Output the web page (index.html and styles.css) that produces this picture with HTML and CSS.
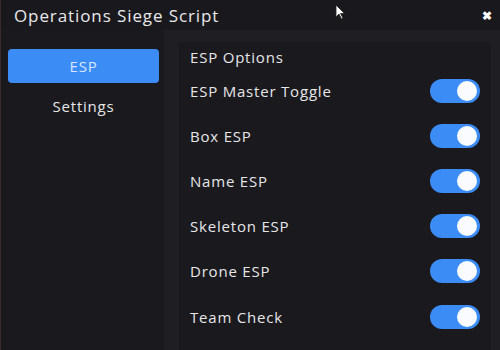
FILE: index.html
```html
<!DOCTYPE html>
<html>
    <head>
        <meta charset="UTF-8" />
        <title>Operations Siege Script</title>
        <link rel="stylesheet" href="styles.css">
    </head>

    <body>
        <div id="window">
            <div id="titleBar">
                <p id="title">Operations Siege Script</p>
                <span id="closeBtn">&#x2716;</span>
            </div>
            <div id="main">
                <div id="sidebar">
                    <div class="tab active">ESP</div>
                    <div class="tab">Settings</div>
                </div>
                <div id="content">
                    <p class="section-title">ESP Options</p>
                    <div class="option">
                        <span>ESP Master Toggle</span>
                        <span class="toggle on"></span>
                    </div>
                    <div class="option">
                        <span>Box ESP</span>
                        <span class="toggle on"></span>
                    </div>
                    <div class="option">
                        <span>Name ESP</span>
                        <span class="toggle on"></span>
                    </div>
                    <div class="option">
                        <span>Skeleton ESP</span>
                        <span class="toggle on"></span>
                    </div>
                    <div class="option">
                        <span>Drone ESP</span>
                        <span class="toggle on"></span>
                    </div>
                    <div class="option">
                        <span>Team Check</span>
                        <span class="toggle on"></span>
                    </div>
                </div>
            </div>
            <!-- mouse pointer captured in the screenshot -->
            <svg id="cursor" width="10" height="16" viewBox="0 0 10 16">
                <path d="M1 1 L1 13 L4 10 L6.5 15 L8 14.3 L5.6 9.5 L9.5 9.5 Z" fill="white" stroke="#222" stroke-width="0.8"/>
            </svg>
        </div>
    </body>
</html>
```

FILE: styles.css
```css
* {
    margin: 0;
    padding: 0;
    box-sizing: border-box;
}

body {
    width: 500px;
    height: 350px;
    overflow: hidden;
    background-color: #1f1e23;
    color: #e6e6e8;
    font-family: "Open Sans", "Noto Sans", sans-serif;
}

#window {
    position: relative;
    height: 100%;
    display: flex;
    flex-direction: column;
    border-left: 1px solid #3a2a2a;
}

#titleBar {
    height: 30px;
    display: flex;
    align-items: center;
    justify-content: space-between;
    padding: 0 8px 0 13px;
    background-color: #19181d;
}

#title {
    font-size: 17px;
    color: #e8e8ea;
    letter-spacing: 0.9px;
}

#closeBtn {
    font-size: 12px;
    color: white;
    font-weight: bold;
}

#main {
    flex: 1;
    display: flex;
    gap: 15px;
    padding-right: 9px;
}

#sidebar {
    width: 163px;
    background-color: #1a191e;
    padding: 19px 5px 0 7px;
    display: flex;
    flex-direction: column;
    gap: 6px;
}

.tab {
    height: 34px;
    display: flex;
    align-items: center;
    justify-content: center;
    font-size: 15px;
    color: #e6e6e8;
    letter-spacing: 0.8px;
    border-radius: 4px;
}

.tab.active {
    background-color: #3c8cf6;
    color: #d8e6ff;
}

#content {
    flex: 1;
    margin-top: 12px;
    background-color: #1a191e;
    padding: 5px 11px 0 11px;
}

.section-title {
    font-size: 15px;
    height: 21px;
    line-height: 21px;
    letter-spacing: 0.8px;
}

.option {
    height: 45.2px;
    display: flex;
    align-items: center;
    justify-content: space-between;
    font-size: 15px;
    letter-spacing: 0.8px;
}

.toggle {
    position: relative;
    width: 50px;
    height: 24px;
    border-radius: 12px;
    background-color: #3c8cf6;
}

.toggle::after {
    content: "";
    position: absolute;
    top: 2px;
    right: 3px;
    width: 20px;
    height: 20px;
    border-radius: 50%;
    background-color: #fafbff;
}

#cursor {
    position: absolute;
    top: 4px;
    left: 334px;
}
```
